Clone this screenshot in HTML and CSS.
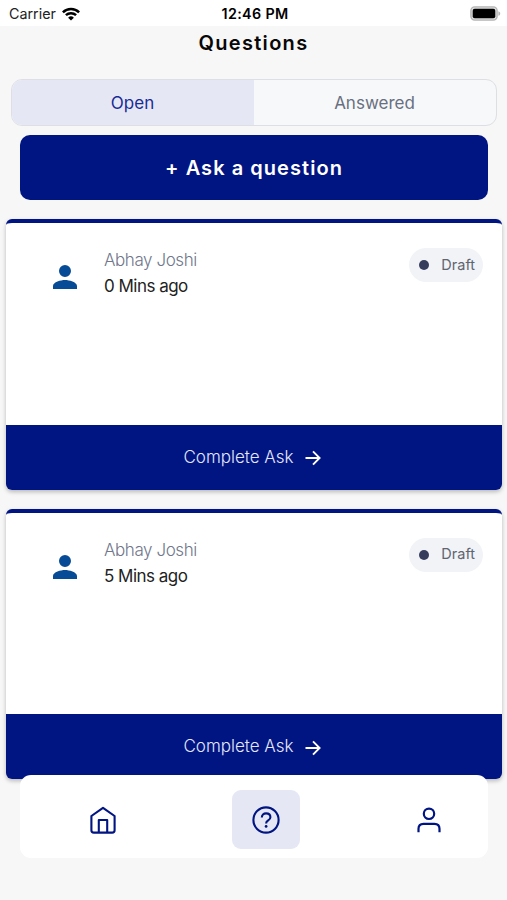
FILE: index.html
```html
<!DOCTYPE html>
<html lang="en">
<head>
<meta charset="utf-8">
<title>Questions</title>
<link rel="stylesheet" href="styles.css">
</head>
<body>
<div class="screen">
  <div class="status">
    <div class="status-left">
      <span class="carrier">Carrier</span>
      <svg class="wifi" width="18" height="14" viewBox="0 0 18 14" fill="none" stroke="#000" stroke-width="2.5"><path d="M.9 5.3a11.5 11.5 0 0 1 16.2 0M3.9 8.2a7.4 7.4 0 0 1 10.2 0"/><path d="M9 13.6 6.1 10.7a4.1 4.1 0 0 1 5.8 0z" fill="#000" stroke="none"/></svg>
    </div>
    <span class="time">12:46 PM</span>
    <svg class="battery" width="31" height="15" viewBox="0 0 31 15"><rect x=".9" y=".9" width="26.2" height="13.2" rx="3.8" fill="#ddd" stroke="#b4b4b4" stroke-width="1.4"/><rect x="2.7" y="2.7" width="22.6" height="9.6" rx="2"/><path d="M28.4 5.2c2.4.8 2.4 3.8 0 4.6z" fill="#b4b4b4"/></svg>
  </div>
  <h1 class="title">Questions</h1>
  <div class="tabs">
    <div class="tab tab-active">Open</div>
    <div class="tab">Answered</div>
  </div>
  <div class="ask"><span>+ Ask a question</span></div>

  <article class="card">
    <div class="card-body">
      <svg class="avatar" width="24" height="24" viewBox="4 4 16 16" fill="#064b96"><path d="M12 12a4 4 0 1 0 0-8 4 4 0 0 0 0 8zm0 2c-2.67 0-8 1.34-8 4v2h16v-2c0-2.66-5.33-4-8-4z"/></svg>
      <div class="who"><span class="name">Abhay Joshi</span><span class="when">0 Mins ago</span></div>
      <div class="badge"><i class="dot"></i><span class="state">Draft</span></div>
    </div>
    <div class="card-action"><span>Complete Ask</span>
      <svg width="16" height="16" viewBox="0 0 16 16" fill="none" stroke="#fff" stroke-width="1.9"><path d="M.5 8h14M8 1.3 14.6 8 8 14.7"/></svg>
    </div>
  </article>

  <article class="card">
    <div class="card-body">
      <svg class="avatar" width="24" height="24" viewBox="4 4 16 16" fill="#064b96"><path d="M12 12a4 4 0 1 0 0-8 4 4 0 0 0 0 8zm0 2c-2.67 0-8 1.34-8 4v2h16v-2c0-2.66-5.33-4-8-4z"/></svg>
      <div class="who"><span class="name">Abhay Joshi</span><span class="when">5 Mins ago</span></div>
      <div class="badge"><i class="dot"></i><span class="state">Draft</span></div>
    </div>
    <div class="card-action"><span>Complete Ask</span>
      <svg width="16" height="16" viewBox="0 0 16 16" fill="none" stroke="#fff" stroke-width="1.9"><path d="M.5 8h14M8 1.3 14.6 8 8 14.7"/></svg>
    </div>
  </article>

  <nav class="nav">
    <div class="nav-item"><svg width="26" height="28" viewBox="0 0 26 28" fill="none" stroke="#001482" stroke-width="2.1" stroke-linejoin="round"><path d="M13 1.8 1.4 10v14.2q0 2.4 2.4 2.4h18.4q2.4 0 2.4-2.4V10z"/><path d="M8.8 26.6V14h8.4v12.6"/></svg></div>
    <div class="nav-item nav-active"><svg width="28" height="28" viewBox="0 0 28 28" fill="none" stroke="#001482" stroke-width="2.1"><circle cx="14" cy="14" r="12.6"/><path d="M9.8 11.6c0-2.6 1.8-4.2 4.3-4.2s4.3 1.5 4.3 3.8c0 3.3-4.3 3.1-4.3 6.2"/><circle cx="14.1" cy="20.4" r="1.4" fill="#001482" stroke="none"/></svg></div>
    <div class="nav-item"><svg width="24" height="26" viewBox="0 0 24 26" fill="none" stroke="#001482" stroke-width="2.2"><circle cx="12" cy="6.8" r="5.2"/><path d="M1.5 25.2v-3.4q0-5 5-5h11q5 0 5 5v3.4"/></svg></div>
  </nav>
</div>
</body>
</html>
```

FILE: styles.css
```css
* { box-sizing: border-box; }
body { margin: 0; font-family: Inter, "Liberation Sans", sans-serif; }
.screen { height: 900px; overflow: hidden; background: #f7f7f7; position: relative; }
.status { height: 26px; background: #fff; display: grid; grid-template-columns: 1fr auto 1fr; align-items: center; padding: 0 6px 0 9px; line-height: 26px; }
.status-left { display: flex; align-items: center; gap: 6px; }
.carrier { font-size: 14.3px; color: #222; padding-top: 1px; }
.time { font-size: 14.3px; font-weight: 600; letter-spacing: .35px; padding-top: 1px; }
.battery { justify-self: end; }
.title { margin: 0; height: 53px; line-height: 34px; text-align: center; font-size: 20px; font-weight: 600; letter-spacing: 1.3px; color: #080808; }
.tabs { margin: 0 10px 0 11px; height: 47px; display: flex; border: 1.5px solid #dedfe4; border-radius: 11px; overflow: hidden; background: #f7f8fa; }
.tab { flex: 1; display: flex; align-items: center; justify-content: center; font-size: 17px; color: #687080; padding-right: 1px; }
.tab-active { background: #e5e8f4; color: #1a2b96; }
.ask { margin: 9px 19px 0 20px; height: 65px; border-radius: 10px; background: #001482; color: #fff; display: flex; align-items: center; justify-content: center; font-size: 20px; font-weight: 600; letter-spacing: 1.05px; }
.card { margin: 19.4px 5px 0 6px; height: 270.2px; border-top: 4px solid #001482; border-radius: 6px; overflow: hidden; background: #fff; box-shadow: 0 2px 4px rgba(0,0,0,.25); }
.card-body { height: 201.2px; display: flex; align-items: flex-start; padding: 24px 19px 0 47px; }
.avatar { margin-top: 18px; }
.who { margin-left: 27px; display: flex; flex-direction: column; font-size: 17px; line-height: 26px; font-weight: 300; }
.name { color: #70778c; letter-spacing: -.42px; }
.when { color: #222; font-weight: 400; letter-spacing: -.52px; }
.badge { margin: 1px 0 0 auto; width: 74px; height: 34px; border-radius: 17px; background: #f1f3f7; display: flex; align-items: center; justify-content: space-between; padding: 0 8px 0 10px; font-size: 14.5px; color: #606571; }
.state { padding-bottom: 2px; }
.dot { width: 10px; height: 10px; border-radius: 50%; background: #363d5c; }
.card-action { height: 65px; background: #001482; color: #e4e7fb; display: flex; align-items: center; justify-content: center; gap: 11px; font-size: 17px; font-weight: 300; padding: 0 4px 1px 0; }
.card-action svg { margin-top: 3px; }
.nav { position: absolute; left: 20px; right: 19px; top: 775px; height: 83px; border-radius: 11px; background: #fff; display: flex; align-items: center; justify-content: space-between; padding: 6px 25px 0 49px; }
.nav-item { width: 68px; height: 59px; border-radius: 9px; display: flex; align-items: center; justify-content: center; }
.nav-active { background: #e5e8f4; }
```
